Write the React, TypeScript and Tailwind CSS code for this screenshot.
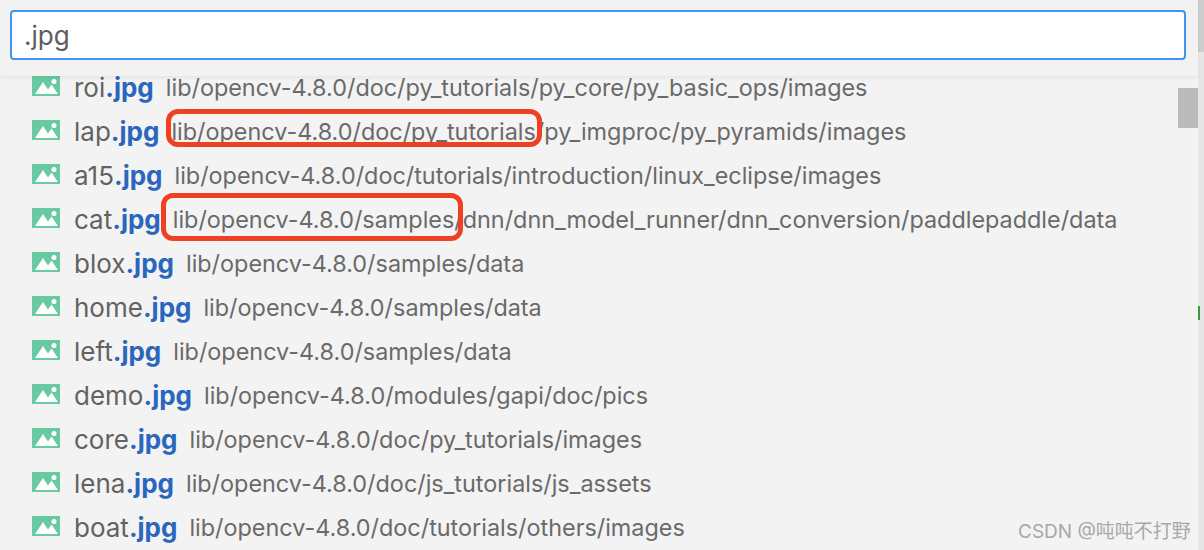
const rows = [
  ['roi', 'lib/opencv-4.8.0/doc/py_tutorials/py_core/py_basic_ops/images'],
  ['lap', 'lib/opencv-4.8.0/doc/py_tutorials/py_imgproc/py_pyramids/images'],
  ['a15', 'lib/opencv-4.8.0/doc/tutorials/introduction/linux_eclipse/images'],
  ['cat', 'lib/opencv-4.8.0/samples/dnn/dnn_model_runner/dnn_conversion/paddlepaddle/data'],
  ['blox', 'lib/opencv-4.8.0/samples/data'],
  ['home', 'lib/opencv-4.8.0/samples/data'],
  ['left', 'lib/opencv-4.8.0/samples/data'],
  ['demo', 'lib/opencv-4.8.0/modules/gapi/doc/pics'],
  ['core', 'lib/opencv-4.8.0/doc/py_tutorials/images'],
  ['lena', 'lib/opencv-4.8.0/doc/js_tutorials/js_assets'],
  ['boat', 'lib/opencv-4.8.0/doc/tutorials/others/images'],
];

function ImageIcon() {
  return (
    <svg width="28" height="20" viewBox="0 0 28 20" className="shrink-0">
      <rect width="28" height="20" fill="#69c9a0" />
      <circle cx="22" cy="5.5" r="2.5" fill="#fff" />
      <path d="M3 18 L11 6 L16 13.5 L19.5 8.5 L26 18 Z" fill="#fff" />
    </svg>
  );
}

export default function App() {
  return (
    <div className="relative flex h-[550px] w-[1204px] overflow-hidden bg-[#e9e9e9] font-['Inter','Noto_Sans_CJK_SC',sans-serif]">
      <div className="flex w-[1198px] flex-col rounded-tr-lg bg-[#f3f3f3]">
        <div className="relative z-10 h-[76px] shrink-0 bg-[#f2f2f2] pl-[10px] pt-[10px] shadow-[0_2px_4px_rgba(0,0,0,0.06)]">
          <div className="flex h-[50px] w-[1176px] items-center rounded-[4px] border-2 border-[#4294ee] bg-white pl-[12px] text-[26px] text-[#5e5e5e]">
            .jpg
          </div>
        </div>
        <div className="-mt-[10px] flex flex-col">
          {rows.map(([name, path]) => (
            <div key={name} className="flex h-[44px] shrink-0 items-center pl-[32px]">
              <div className="-mt-[4px]"><ImageIcon /></div>
              <span className="mb-[2px] ml-[14px] text-[26px] text-[#626262]">
                {name}<span className="font-bold text-[#2a66bd]">.jpg</span>
              </span>
              <span className="ml-[12px] text-[23.4px] text-[#6a6a6a]">{path}</span>
            </div>
          ))}
        </div>
      </div>
      <div className="w-[6px] bg-[#e6e6e6]" />

      {/* scrollbar thumb */}
      <div className="absolute left-[1178px] top-[88px] h-[40px] w-[20px] bg-[#bbbbbb]" />
      <div className="absolute left-[1198px] top-0 h-[52px] w-[6px] bg-[#cdcdcd]" />
      <div className="absolute left-[1198px] top-[306px] h-[14px] w-[2px] bg-[#3f9a3f]" />

      {/* red annotations */}
      <div className="absolute left-[166px] top-[109px] h-[38px] w-[376px] rounded-[12px] border-[5px] border-[#ee4023]" />
      <div className="absolute left-[161px] top-[193px] h-[48px] w-[302px] rounded-[12px] border-[5px] border-[#ee4023]" />

      <div className="absolute left-[1018px] top-[518px] text-[19px] text-[#a8a8a8]">CSDN @吨吨不打野</div>
    </div>
  );
}
